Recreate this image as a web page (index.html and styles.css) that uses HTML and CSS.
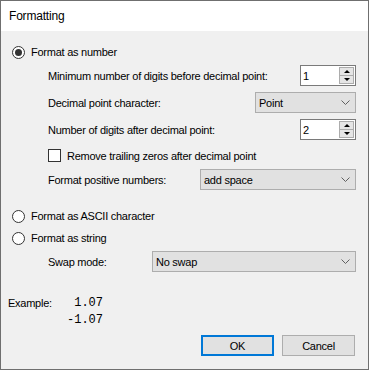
FILE: index.html
```html
<!DOCTYPE html>
<html lang="en">
<head>
    <meta charset="UTF-8">
    <title>Formatting</title>
    <link rel="stylesheet" href="styles.css">
</head>
<body>
    <div class="window">
        <div class="titlebar">Formatting</div>

        <div class="content">
            <div class="radio-row first">
                <span class="radio checked"></span>
                <span>Format as number</span>
            </div>

            <div class="field row-min">
                <span>Minimum number of digits before decimal point:</span>
                <div class="spin">
                    <span class="spin-value">1</span>
                    <div class="spin-buttons">
                        <span class="arrow-up"></span>
                        <span class="arrow-down"></span>
                    </div>
                </div>
            </div>

            <div class="field row-gap">
                <span>Decimal point character:</span>
                <div class="combo combo-point">
                    <span>Point</span>
                    <svg class="chevron" width="9" height="5" viewBox="0 0 9 5"><polyline points="0.5,0.5 4.5,4.5 8.5,0.5" fill="none" stroke="#606060" stroke-width="1"/></svg>
                </div>
            </div>

            <div class="field row-gap">
                <span>Number of digits after decimal point:</span>
                <div class="spin">
                    <span class="spin-value">2</span>
                    <div class="spin-buttons">
                        <span class="arrow-up"></span>
                        <span class="arrow-down"></span>
                    </div>
                </div>
            </div>

            <div class="field check-row">
                <span class="checkbox"></span>
                <span>Remove trailing zeros after decimal point</span>
            </div>

            <div class="field row-positive">
                <span>Format positive numbers:</span>
                <div class="combo combo-positive">
                    <span>add space</span>
                    <svg class="chevron" width="9" height="5" viewBox="0 0 9 5"><polyline points="0.5,0.5 4.5,4.5 8.5,0.5" fill="none" stroke="#606060" stroke-width="1"/></svg>
                </div>
            </div>

            <div class="radio-row ascii">
                <span class="radio"></span>
                <span>Format as ASCII character</span>
            </div>

            <div class="radio-row string">
                <span class="radio"></span>
                <span>Format as string</span>
            </div>

            <div class="field row-swap">
                <span>Swap mode:</span>
                <div class="combo combo-swap">
                    <span>No swap</span>
                    <svg class="chevron" width="9" height="5" viewBox="0 0 9 5"><polyline points="0.5,0.5 4.5,4.5 8.5,0.5" fill="none" stroke="#606060" stroke-width="1"/></svg>
                </div>
            </div>

            <div class="example">
                <span class="example-label">Example:</span>
                <div class="example-values">
                    <span>&nbsp;1.07</span>
                    <span>-1.07</span>
                </div>
            </div>

            <div class="buttons">
                <button class="btn default">OK</button>
                <button class="btn">Cancel</button>
            </div>
        </div>
    </div>
</body>
</html>
```

FILE: styles.css
```css
body {
    margin: 0;
    font-family: "Liberation Sans", Arial, sans-serif;
    font-size: 11px;
    letter-spacing: -0.25px;
    color: #000;
    white-space: nowrap;
}
.window {
    width: 369px;
    height: 370px;
    box-sizing: border-box;
    border: 1px solid #6f6f6f;
    background-color: #f0f0f0;
    display: flex;
    flex-direction: column;
}
.titlebar {
    height: 30px;
    background-color: #fff;
    padding-left: 8px;
    line-height: 30px;
    font-size: 12px;
    letter-spacing: -0.2px;
}
.content {
    flex: 1;
    padding: 0 12px 0 6px;
    display: flex;
    flex-direction: column;
}
.radio-row {
    height: 20px;
    display: flex;
    align-items: center;
    gap: 6px;
    padding-left: 5px;
}
.radio-row.first {
    margin-top: 11px;
}
.radio-row.ascii {
    margin-top: 16px;
}
.radio-row.string {
    margin-top: 2px;
}
.radio {
    width: 11px;
    height: 11px;
    border: 1px solid #333;
    border-radius: 50%;
    background-color: #fff;
    display: flex;
    align-items: center;
    justify-content: center;
}
.radio.checked::after {
    content: "";
    width: 7px;
    height: 7px;
    border-radius: 50%;
    background-color: #333;
}
.field {
    height: 21px;
    display: flex;
    align-items: center;
    justify-content: space-between;
    padding-left: 41px;
}
.row-min {
    margin-top: 3px;
}
.row-gap {
    margin-top: 6px;
}
.check-row {
    justify-content: flex-start;
    gap: 6px;
    margin-top: 5px;
}
.row-positive {
    margin-top: 3px;
}
.row-swap {
    margin-top: 3px;
}
.checkbox {
    width: 11px;
    height: 11px;
    border: 1px solid #333;
    background-color: #fff;
}
.spin {
    width: 56px;
    height: 21px;
    box-sizing: border-box;
    border: 1px solid #7a7a7a;
    background-color: #fff;
    display: flex;
    align-items: center;
    justify-content: space-between;
}
.spin-value {
    padding-left: 2px;
}
.spin-buttons {
    width: 15px;
    height: 17px;
    margin-right: 1px;
    box-sizing: border-box;
    border: 1px solid #acacac;
    background-color: #e5e5e5;
    display: flex;
    flex-direction: column;
}
.arrow-up, .arrow-down {
    flex: 1;
    display: flex;
    align-items: center;
    justify-content: center;
}
.arrow-down {
    border-top: 1px solid #acacac;
}
.arrow-up::after {
    content: "";
    border-left: 3px solid transparent;
    border-right: 3px solid transparent;
    border-bottom: 3px solid #000;
}
.arrow-down::after {
    content: "";
    border-left: 3px solid transparent;
    border-right: 3px solid transparent;
    border-top: 3px solid #000;
}
.combo {
    height: 21px;
    box-sizing: border-box;
    border: 1px solid #adadad;
    background-color: #e1e1e1;
    display: flex;
    align-items: center;
    justify-content: space-between;
    padding: 0 5px 0 3px;
}
.combo-point {
    width: 101px;
}
.combo-positive {
    width: 156px;
}
.combo-swap {
    width: 204px;
}
.example {
    margin-top: 23px;
    display: flex;
    padding-left: 1px;
}
.example-label {
    width: 59px;
    line-height: 17px;
}
.example-values {
    display: flex;
    flex-direction: column;
    font-family: "Liberation Mono", "Courier New", monospace;
    font-size: 12px;
    letter-spacing: 0;
    line-height: 17px;
}
.buttons {
    margin-top: 6px;
    display: flex;
    justify-content: flex-end;
    gap: 8px;
    padding-right: 1px;
}
.btn {
    width: 73px;
    height: 21px;
    box-sizing: border-box;
    border: 1px solid #adadad;
    background-color: #e1e1e1;
    font-family: "Liberation Sans", Arial, sans-serif;
    font-size: 11px;
    letter-spacing: -0.25px;
    color: #000;
    padding: 0;
}
.btn.default {
    border: 2px solid #0078d7;
}
```
